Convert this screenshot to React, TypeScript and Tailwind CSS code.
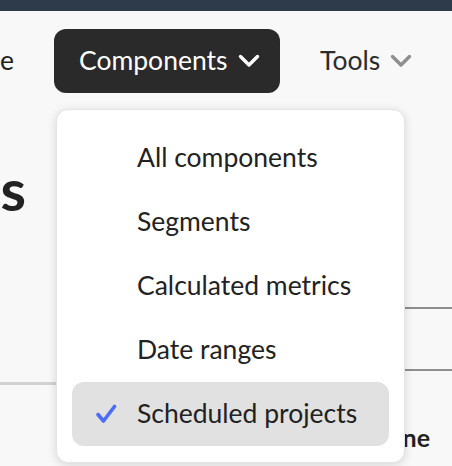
const items = [
  { label: 'All components', selected: false },
  { label: 'Segments', selected: false },
  { label: 'Calculated metrics', selected: false },
  { label: 'Date ranges', selected: false },
  { label: 'Scheduled projects', selected: true },
];

function Chevron({ className }: { className?: string }) {
  return (
    <svg width="22" height="14" viewBox="0 0 22 14" fill="none" className={className}>
      <path d="M2.5 2.5 L11 11 L19.5 2.5" stroke="currentColor" strokeWidth="3.4" strokeLinecap="round" strokeLinejoin="round" />
    </svg>
  );
}

function Checkmark() {
  return (
    <svg width="22" height="20" viewBox="0 0 22 20" fill="none">
      <path d="M3 10.5 L8.5 17 L19.5 2.5" stroke="#4a6cf7" strokeWidth="3.6" strokeLinecap="round" strokeLinejoin="round" />
    </svg>
  );
}

export default function App() {
  return (
    <div className="relative h-[466px] w-[452px] overflow-hidden bg-[#f8f8f8] font-['Lato',sans-serif] text-[#222]">
      <div className="h-[11px] bg-[#2e3b4b]" />

      {/* top nav */}
      <nav className="mt-[18px] flex h-[64px] items-center text-[26.5px]">
        <div className="flex w-[14px] justify-end overflow-hidden">
          <span className="whitespace-nowrap">Home</span>
        </div>
        <button
          type="button"
          className="ml-[40px] flex h-[64px] w-[226px] items-center gap-[10px] rounded-[12px] bg-[#2a2a2a] pl-[25px] text-white"
        >
          <span>Components</span>
          <Chevron className="text-white" />
        </button>
        <button type="button" className="ml-[40px] flex items-center gap-[10px] text-[#2c2c2c]">
          <span>Tools</span>
          <Chevron className="text-[#8f8f8f]" />
        </button>
      </nav>

      {/* page content under the menu */}
      <div className="flex">
        <div className="w-[56px] shrink-0">
          <div className="mt-[64px] flex w-[26px] justify-end overflow-hidden">
            <h1 className="whitespace-nowrap text-[58px] leading-[64px] font-bold">Scheduled projects</h1>
          </div>
          <div className="mt-[161px] h-[3px] bg-[#d2d2d2]" />
        </div>
        <div className="flex-1">
          <div className="mt-[214px] h-[2px] bg-[#8f8f8f]" />
          <div className="h-[60px]" />
          <div className="h-[2px] bg-[#8f8f8f]" />
          <div className="mt-[54px] flex w-[374px] justify-end text-[25px] leading-none font-bold">
            <span className="whitespace-nowrap">Time zone</span>
          </div>
        </div>
      </div>

      {/* dropdown menu */}
      <div className="absolute left-[56px] top-[109px] w-[349px] rounded-[12px] border border-[#e4e4e4] bg-white px-[15px] pb-[16px] pt-[16px] shadow-[0_2px_10px_rgba(0,0,0,0.14)]">
        <ul>
          {items.map(item => (
            <li
              key={item.label}
              className={`flex h-[64px] items-center rounded-[12px] text-[26.5px] ${item.selected ? 'bg-[#e1e1e1]' : ''}`}
            >
              <span className="flex w-[65px] justify-end pr-[20px]">
                {item.selected ? <Checkmark /> : null}
              </span>
              <span className="whitespace-nowrap">{item.label}</span>
            </li>
          ))}
        </ul>
      </div>
    </div>
  );
}
